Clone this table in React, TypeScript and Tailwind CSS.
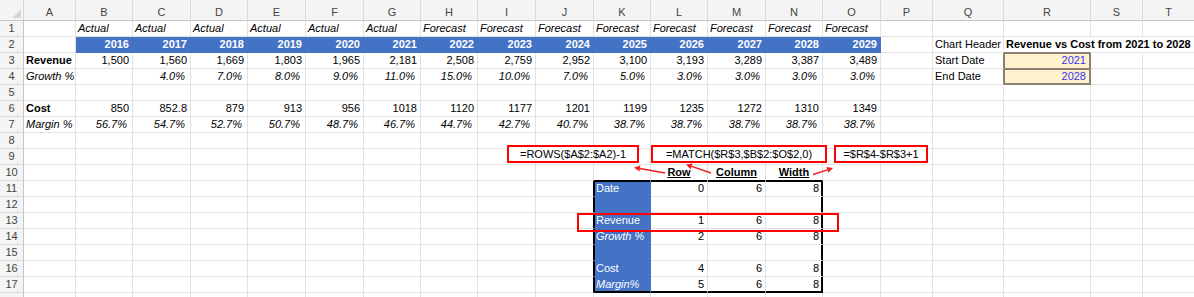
import React from "react";

type Cell = { t?: string; x?: string; f?: string };

const LETTERS = ["A", "B", "C", "D", "E", "F", "G", "H", "I", "J", "K", "L", "M", "N", "O", "P", "Q", "R", "S", "T"];

const W = [
  "w-[52px]", "w-[57px]", "w-[58px]", "w-[57px]", "w-[58px]", "w-[58px]", "w-[57px]", "w-[57px]",
  "w-[58px]", "w-[58px]", "w-[57px]", "w-[57px]", "w-[58px]", "w-[57px]", "w-[58px]",
  "w-[52px]", "w-[71px]", "w-[87px]", "w-[52px]", "w-[52px]",
];

const GRID = "border-[#E1E1E1]";
const NUM = "justify-end pr-[3px]";
const PCT = "justify-end pr-[5px] italic";
const BLUE = "bg-[#4472C4] border-[#4472C4] text-white";
const YEAR = "bg-[#4472C4] border-[#4472C4] text-white font-bold justify-end pr-[3px]";
const INPUT = "justify-end pr-[4px] text-[#3434F2]";

const row = (cells: Record<string, Cell>) => LETTERS.map((l) => cells[l] ?? {});

const years = ["2016", "2017", "2018", "2019", "2020", "2021", "2022", "2023", "2024", "2025", "2026", "2027", "2028", "2029"];
const revenue = ["1,500", "1,560", "1,669", "1,803", "1,965", "2,181", "2,508", "2,759", "2,952", "3,100", "3,193", "3,289", "3,387", "3,489"];
const growth = ["", "4.0%", "7.0%", "8.0%", "9.0%", "11.0%", "15.0%", "10.0%", "7.0%", "5.0%", "3.0%", "3.0%", "3.0%", "3.0%"];
const cost = ["850", "852.8", "879", "913", "956", "1018", "1120", "1177", "1201", "1199", "1235", "1272", "1310", "1349"];
const margin = ["56.7%", "54.7%", "52.7%", "50.7%", "48.7%", "46.7%", "44.7%", "42.7%", "40.7%", "38.7%", "38.7%", "38.7%", "38.7%", "38.7%"];

const span = (vals: string[], x: string, f?: string) => {
  const out: Record<string, Cell> = {};
  vals.forEach((v, i) => {
    out[LETTERS[i + 1]] = { t: v, x, f };
  });
  return out;
};

function tableRow(r: number, label: string, italic: boolean, vals: string[] | null): Cell[] {
  const first = r === 11;
  const last = r === 17;
  const k = first
    ? "shadow-[inset_1px_1px_0_#000]"
    : last
      ? "border-b-black shadow-[inset_1px_-1px_0_#000]"
      : "shadow-[inset_1px_0_0_#000]";
  const mid = first ? "shadow-[inset_0_1px_0_#000]" : last ? "border-b-black shadow-[inset_0_-1px_0_#000]" : "";
  const n = first
    ? "border-r-black shadow-[inset_-1px_1px_0_#000]"
    : last
      ? "border-r-black border-b-black shadow-[inset_-1px_-1px_0_#000]"
      : "border-r-black shadow-[inset_-1px_0_0_#000]";
  return row({
    J: { f: GRID + " border-r-black" },
    K: { t: label, x: italic ? "italic" : "", f: BLUE + " " + k },
    L: { t: vals?.[0], x: NUM, f: GRID + " " + mid },
    M: { t: vals?.[1], x: NUM, f: GRID + " " + mid },
    N: { t: vals?.[2], x: NUM, f: GRID + " " + n },
  });
}

const rows: Cell[][] = [
  row({ ...span(years.map((_, i) => (i < 6 ? "Actual" : "Forecast")), "italic") }),
  row({
    ...span(years, YEAR, "bg-[#4472C4] border-[#4472C4]"),
    Q: { t: "Chart Header" },
    R: { t: "Revenue vs Cost from 2021 to 2028", x: "font-bold", f: GRID + " border-r-transparent border-b-[#8B8070]" },
    S: { f: GRID + " border-r-transparent" },
  }),
  row({
    A: { t: "Revenue", x: "font-bold" },
    ...span(revenue, NUM),
    Q: { t: "Start Date", f: GRID + " border-r-[#8B8070]" },
    R: {
      t: "2021",
      x: INPUT,
      f: "bg-[#FFF2CC] border-[#8B8070] shadow-[inset_1px_1px_0_#8B8070,inset_-1px_0_0_#8B8070]",
    },
  }),
  row({
    A: { t: "Growth %", x: "italic" },
    ...span(growth, PCT),
    Q: { t: "End Date", f: GRID + " border-r-[#8B8070]" },
    R: {
      t: "2028",
      x: INPUT,
      f: "bg-[#FFF2CC] border-[#8B8070] shadow-[inset_1px_1px_0_#8B8070,inset_-1px_-1px_0_#8B8070]",
    },
  }),
  row({}),
  row({ A: { t: "Cost", x: "font-bold" }, ...span(cost, NUM) }),
  row({ A: { t: "Margin %", x: "italic" }, ...span(margin, PCT) }),
  row({}),
  row({}),
  row({
    K: { f: GRID + " border-b-black" },
    L: { t: "Row", x: "justify-center font-bold underline", f: GRID + " border-b-black" },
    M: { t: "Column", x: "justify-center font-bold underline", f: GRID + " border-b-black" },
    N: { t: "Width", x: "justify-center font-bold underline", f: GRID + " border-b-black" },
  }),
  tableRow(11, "Date", false, ["0", "6", "8"]),
  tableRow(12, "", false, null),
  tableRow(13, "Revenue", false, ["1", "6", "8"]),
  tableRow(14, "Growth %", true, ["2", "6", "8"]),
  tableRow(15, "", false, null),
  tableRow(16, "Cost", false, ["4", "6", "8"]),
  tableRow(17, "Margin%", true, ["5", "6", "8"]),
  row({}),
];

function FormulaBox({ pos, text }: { pos: string; text: string }) {
  return (
    <div
      className={
        "absolute top-[145px] h-[18px] flex items-center justify-center border-2 border-[#FF0000] bg-white leading-none " +
        pos
      }
    >
      {text}
    </div>
  );
}

export default function App() {
  return (
    <div className="relative w-[1194px] h-[297px] overflow-hidden bg-white text-[11px] text-black font-['Liberation_Sans',Arial,sans-serif]">
      <div className="flex h-[21px]">
        <div className="w-[24px] shrink-0 bg-[#F4F4F4] border-r border-b border-r-[#D4D4D4] border-b-[#C6C6C6]">
          <svg width="23" height="20" viewBox="0 0 23 20">
            <polygon points="21,9 21,18 12,18" fill="#D6D6D6" />
          </svg>
        </div>
        {LETTERS.map((l, j) => (
          <div
            key={l}
            className={
              "flex shrink-0 items-end justify-center pb-[2px] leading-none text-[#444] bg-[#F4F4F4] border-r border-b border-r-[#DADADA] border-b-[#C6C6C6] " +
              W[j]
            }
          >
            {l}
          </div>
        ))}
      </div>

      {rows.map((cells, i) => (
        <div key={i} className="flex h-[16px]">
          <div className="w-[24px] shrink-0 flex items-end justify-center pb-[2px] leading-none text-[#444] bg-[#F4F4F4] border-r border-b border-r-[#C6C6C6] border-b-[#DADADA]">
            {i < 17 ? i + 1 : ""}
          </div>
          {cells.map((c, j) => (
            <div
              key={j}
              className={
                "flex shrink-0 items-end pb-[2px] px-[2px] leading-none whitespace-nowrap border-r border-b " +
                (c.f ?? GRID) +
                " " +
                W[j] +
                " " +
                (c.x ?? "")
              }
            >
              {c.t}
            </div>
          ))}
        </div>
      ))}

      <FormulaBox pos="left-[507px] w-[132px]" text="=ROWS($A$2:$A2)-1" />
      <FormulaBox pos="left-[651px] w-[176px]" text="=MATCH($R$3,$B$2:$O$2,0)" />
      <FormulaBox pos="left-[834px] w-[94px]" text="=$R$4-$R$3+1" />
      <div className="absolute left-[577px] top-[213px] w-[262px] h-[19px] border-2 border-[#FF0000]" />

      <svg className="absolute inset-0 pointer-events-none" width="1194" height="297">
        <g stroke="#F01E1E" strokeWidth="1.5" fill="#F01E1E">
          <line x1="665" y1="173" x2="639.9" y2="168.6" />
          <polygon points="634,167.5 640.4,165.6 639.4,171.5" stroke="none" />
          <line x1="711" y1="173" x2="691.7" y2="166.4" />
          <polygon points="686,164.5 692.6,163.6 690.7,169.2" stroke="none" />
          <line x1="813" y1="174.5" x2="827.3" y2="169.9" />
          <polygon points="833,168 828.2,172.7 826.4,167" stroke="none" />
        </g>
      </svg>
    </div>
  );
}
